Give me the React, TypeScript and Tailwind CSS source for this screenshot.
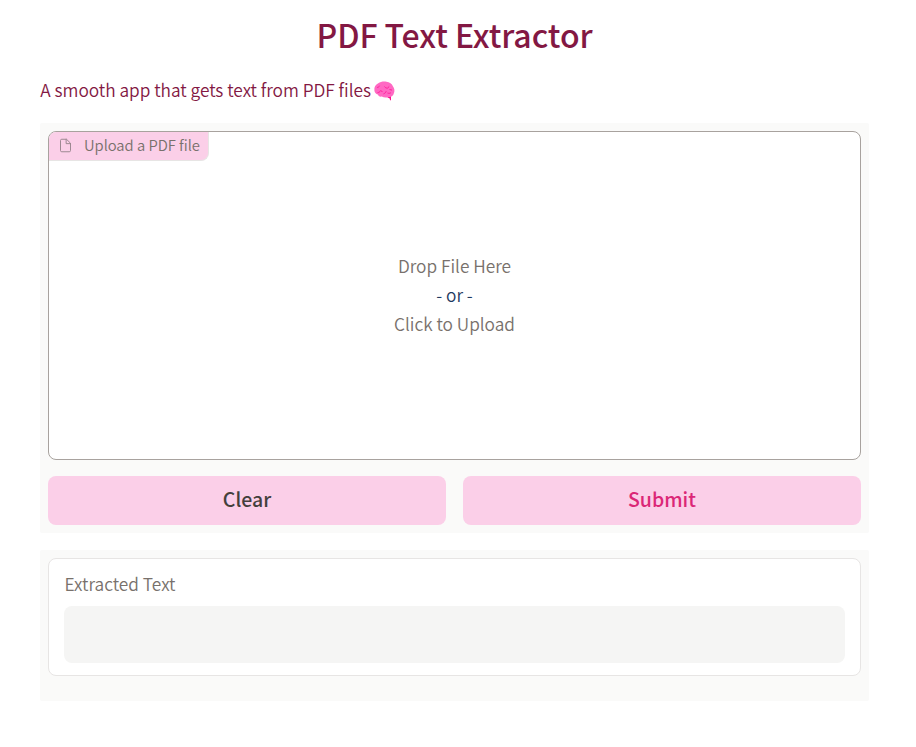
function FileIcon() {
  return (
    <svg className="mb-[2px] h-[15px] w-[15px] shrink-0" viewBox="0 0 24 24" fill="none" stroke="currentColor" strokeWidth="1.5" strokeLinecap="round" strokeLinejoin="round">
      <path d="M13 2H6a2 2 0 0 0-2 2v16a2 2 0 0 0 2 2h12a2 2 0 0 0 2-2V9z" />
      <polyline points="13 2 13 9 20 9" />
    </svg>
  );
}

function BrainIcon() {
  return (
    <svg className="mt-[1px] ml-[3.300px] h-[20px] w-[21px] shrink-0" viewBox="0 0 21 20" fill="none">
      <path d="M12.500 15l4.500-.3v4.800c-.9-.3-1.200-1.200-1.500-2.300-1.200-.2-2.300-1-3-2.200z" fill="#ff0f8f" />
      <path d="M.4 9.500C0 6 1.500 3.500 4.300 2.300 6.300.5 10 .2 12.500.7c3 .2 5.500 2 6.400 4.500 1.700 2 2 5 .9 7.200-.6 2.500-2.800 3.900-5 3.500-2.200 1-5 .9-7-.3-2.200.4-3.500-.5-4-2C1.800 13 .6 11.500.4 9.500z" fill="#ff69c3" />
      <path d="M3.500 11.700c1.500-.2 2.500-1 3-2l2 .9M3.200 6.500c1.300-.3 2-.8 2.400-1.700M10.500 5.500c.8 1.200 1.700 1.700 3 1.600l1.700-1.600M9.500 12.900c1.400-.5 2.300-1.300 2.700-2.700M13.500 12c1.200.5 2.400.4 3.400-.3M15.500 8.500l2.500.6" stroke="#ff1f9c" strokeWidth="1" />
    </svg>
  );
}

export default function App() {
  return (
    <div className="min-h-[747px] bg-white px-10 pt-[13px] font-['Noto_Sans_CJK_SC',sans-serif] text-[17.300px] font-[350] text-[#831843]">
      <h1 className="mr-[7px] text-center text-[32px] leading-[42px] font-medium tracking-[-0.070px]">PDF Text Extractor</h1>
      <p className="mt-[20px] flex h-[30px] items-center leading-[30px] whitespace-nowrap">
        <span className="pl-[0.300px] tracking-[-0.015px]">A smooth app that gets text from PDF files</span>
        <BrainIcon />
      </p>

      <main className="mt-[18px] flex w-[829px] flex-col gap-[17px]">
        <section className="flex h-[410px] flex-col gap-4 rounded-[2px] bg-[#fafaf9] p-2">
          <div className="flex h-[329px] flex-col overflow-hidden rounded-lg border border-[#a8a29e] bg-white">
            <div className="flex h-[29px] w-[160px] items-center gap-[11px] rounded-br-lg border-r border-b border-[#e7e5e4] bg-[#fbcfe8] pl-[9px] leading-[28px] whitespace-nowrap text-[#78716c]">
              <span className="text-[#96848c]">
                <FileIcon />
              </span>
              <span className="pb-[2px] text-[14.800px] tracking-[-0.030px]">Upload a PDF file</span>
            </div>
            <div className="mt-[90px] text-center leading-[29px] text-[#78716c]">
              <div>Drop File Here</div>
              <div className="text-[#1f3a5f]">- or -</div>
              <div>Click to Upload</div>
            </div>
          </div>
          <div className="grid h-[49px] grid-cols-2 gap-[17px] text-[19.500px] font-medium">
            <button className="rounded-lg bg-[#fbcfe8] pb-[4px] text-[#44403c]">Clear</button>
            <button className="rounded-lg bg-[#fbcfe8] pb-[4px] text-[#db2777]">Submit</button>
          </div>
        </section>

        <section className="h-[151px] rounded-[2px] bg-[#fafaf9] p-2">
          <div className="h-[118px] rounded-lg border border-[#e7e5e4] bg-white px-[15px] pt-[11px]">
            <label className="block h-[36px] pl-[0.500px] leading-[28px] text-[#78716c]">Extracted Text</label>
            <div className="h-[57px] rounded-lg bg-[#f5f5f4]" />
          </div>
        </section>
      </main>
    </div>
  );
}
